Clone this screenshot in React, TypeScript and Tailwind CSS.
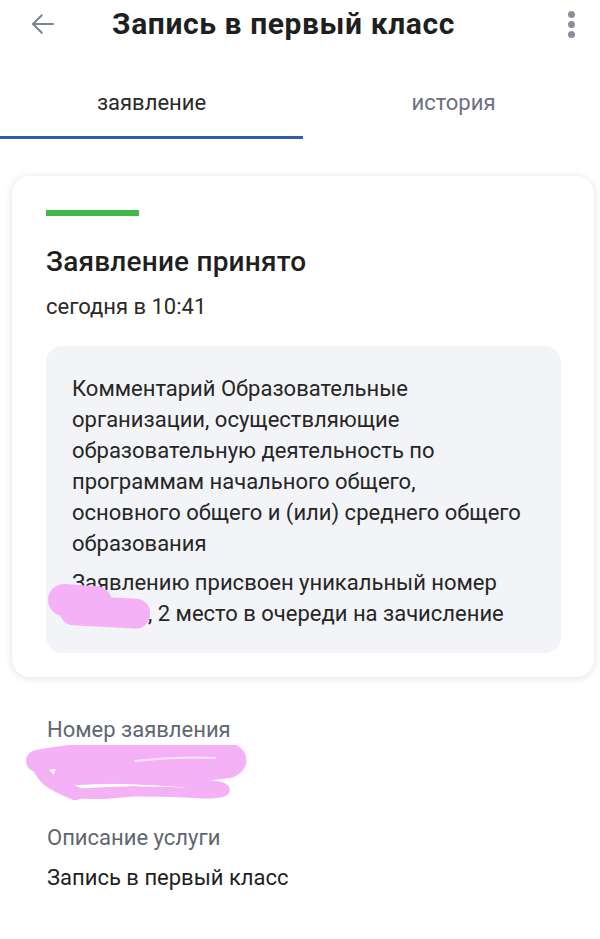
import React from "react";

const font = { fontFamily: "Roboto, 'Noto Sans', sans-serif" };

const BackArrow = () => (
  <svg width="30" height="30" viewBox="0 0 24 24" fill="none" stroke="#7b8290" strokeWidth="1.6" strokeLinecap="round" strokeLinejoin="round">
    <path d="M20 12H4" />
    <path d="M11 5l-7 7 7 7" />
  </svg>
);

const Kebab = () => (
  <div className="flex flex-col items-center gap-[3px]">
    <span className="w-[7px] h-[7px] rounded-full bg-[#8a909b]" />
    <span className="w-[7px] h-[7px] rounded-full bg-[#8a909b]" />
    <span className="w-[7px] h-[7px] rounded-full bg-[#8a909b]" />
  </div>
);

// privacy scribble over the application number
const Scribble = () => (
  <svg width="230" height="60" viewBox="0 0 230 60" fill="none" className="block">
    <g stroke="#f4b1f6" strokeLinecap="round" strokeLinejoin="round">
      <path d="M12 16 C60 6 150 4 200 8 C212 10 214 18 204 22 C160 28 90 26 40 30" strokeWidth="22" />
      <path d="M40 32 C100 34 170 36 196 42 C206 46 196 50 170 48 C120 46 70 46 50 50" strokeWidth="10" />
      <path d="M14 20 C18 34 30 40 50 48" strokeWidth="14" />
      <path d="M30 40 C50 52 80 50 110 46" strokeWidth="10" />
    </g>
    <path d="M110 16 C140 13 170 12 190 13" stroke="#fbe3fc" strokeWidth="2" strokeLinecap="round" />
  </svg>
);

export default function App() {
  return (
    <div className="w-[600px] h-[939px] bg-white overflow-hidden text-[#202124]" style={font}>
      {/* Header */}
      <header className="h-[48px] flex items-center pl-[28px] pr-[25px]">
        <BackArrow />
        <h1 className="ml-[54px] flex-1 text-[30px] font-bold text-[#1f1f1f] leading-[30px] tracking-[0.6px]">
          Запись в первый класс
        </h1>
        <Kebab />
      </header>

      {/* Tabs */}
      <nav className="mt-[42px] flex">
        <div className="w-[303px] flex flex-col items-center">
          <span className="text-[22px] text-[#2a2a2a] leading-[26px]">заявление</span>
          <span className="mt-[20px] w-full h-[3px] bg-[#2d5fb0]" />
        </div>
        <div className="flex-1 flex flex-col items-center">
          <span className="text-[22px] text-[#6b7180] leading-[26px] pl-[4px]">история</span>
        </div>
      </nav>

      {/* Status card */}
      <div className="ml-[12px] mr-[6px] mt-[37px] rounded-[18px] bg-white shadow-[0_1px_8px_rgba(0,0,0,0.12)] pl-[34px] pr-[33px] pt-[34px] pb-[24px]">
        <div className="w-[93px] h-[6px] bg-[#3dba48]" />
        <h2 className="mt-[30px] text-[28px] font-medium leading-[32px] text-[#1f1f1f] tracking-[0.2px]">Заявление принято</h2>
        <p className="mt-[16px] text-[22px] leading-[26px] text-[#2a2a2a]">сегодня в 10:41</p>

        <div className="mt-[26px] rounded-[16px] bg-[#f2f4f8] px-[26px] pt-[27px] pb-[24px] text-[22px] leading-[31px] text-[#262626]">
          <p>
            Комментарий Образовательные
            <br />
            организации, осуществляющие
            <br />
            образовательную деятельность по
            <br />
            программам начального общего,
            <br />
            основного общего и (или) среднего общего
            <br />
            образования
          </p>
          <p className="mt-[8px] relative">
            Заявлению присвоен уникальный номер
            <br />
            <span className="relative inline-block w-[76px] h-[20px] align-middle">
              <span className="absolute left-[-24px] top-[-20px] w-[64px] h-[32px] rounded-[16px] bg-[#f4b1f6] rotate-[4deg]" />
              <span className="absolute left-[-12px] top-[-8px] w-[90px] h-[30px] rounded-[14px] bg-[#f4b1f6] rotate-[3deg]" />
            </span>
            , 2 место в очереди на зачисление
          </p>
        </div>
      </div>

      {/* Details */}
      <section className="px-[47px] mt-[40px]">
        <p className="text-[22px] leading-[26px] text-[#5f6672]">Номер заявления</p>
        <div className="h-[82px] -ml-[22px] pt-[2px]">
          <Scribble />
        </div>
        <p className="text-[22px] leading-[26px] text-[#5f6672]">Описание услуги</p>
        <p className="mt-[14px] text-[22px] leading-[26px] text-[#1f1f1f]">Запись в первый класс</p>
      </section>
    </div>
  );
}
